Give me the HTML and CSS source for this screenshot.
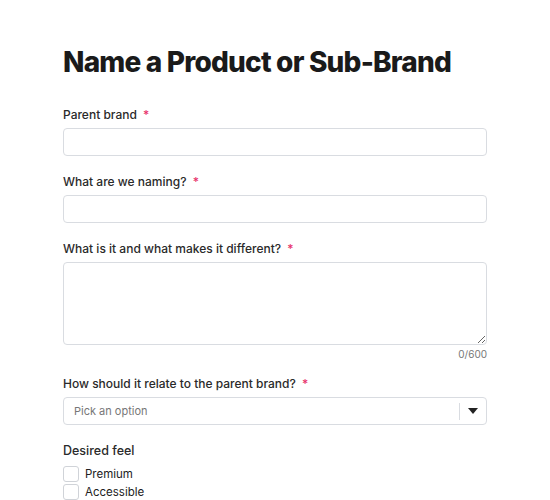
FILE: index.html
```html
<!DOCTYPE html>
<html lang="en">
<head>
  <meta charset="UTF-8">
  <meta name="viewport" content="width=device-width, initial-scale=1.0">
  <title>Name a Product or Sub-Brand</title>
  <link rel="stylesheet" href="styles.css">
</head>
<body>
  <div class="container">
    <h1>Name a Product or Sub-Brand</h1>
    <form>
      <div class="form-group">
        <label class="field-label" for="parent">Parent brand <span class="req">*</span></label>
        <input type="text" id="parent" name="parent">
      </div>

      <div class="form-group">
        <label class="field-label" for="naming">What are we naming? <span class="req">*</span></label>
        <input type="text" id="naming" name="naming">
      </div>

      <div class="form-group">
        <label class="field-label" for="about">What is it and what makes it different? <span class="req">*</span></label>
        <textarea id="about" name="about"></textarea>
        <div class="counter">0/600</div>
      </div>

      <div class="form-group">
        <label class="field-label" for="relate">How should it relate to the parent brand? <span class="req">*</span></label>
        <div class="select">
          <span class="placeholder">Pick an option</span>
          <span class="select-arrow">
            <svg width="10" height="6" viewBox="0 0 10 6"><path d="M0 0h10L5 6z" fill="#222"/></svg>
          </span>
        </div>
      </div>

      <div class="form-group">
        <div class="group-title">Desired feel</div>
        <label class="check"><input type="checkbox"> Premium</label>
        <label class="check"><input type="checkbox"> Accessible</label>
      </div>
    </form>
  </div>
</body>
</html>
```
FILE: styles.css
```css
*{box-sizing:border-box;margin:0;padding:0}
body{background:#fff;font-family:Inter,"Noto Sans",sans-serif;color:#222}
.container{width:424px;margin:0 0 0 63px;padding-top:44px}
h1{font-size:28px;font-weight:800;color:#1a1a1a;letter-spacing:-0.8px;line-height:36px;margin-bottom:27px}
.form-group{margin-bottom:18px}
.field-label{display:block;font-size:12px;font-weight:500;color:#2a2a2a;line-height:16px;margin-bottom:5px}
.req{color:#e8336d;font-size:12px;margin-left:3px}
input[type="text"]{display:block;width:100%;height:28px;border:1px solid #d9dce1;border-radius:4px;background:#fff;font:inherit}
textarea{display:block;width:100%;height:83px;border:1px solid #d9dce1;border-radius:4px;resize:vertical;font:inherit}
.counter{text-align:right;font-size:10px;color:#777;margin-top:3px;line-height:12px}
.form-group:has(.counter){margin-bottom:16px}
.select{display:flex;align-items:center;height:28px;border:1px solid #d9dce1;border-radius:4px;font-size:11px;color:#777}
.placeholder{flex:1;padding-left:10px}
.select-arrow{display:flex;align-items:center;justify-content:center;width:27px;height:17px;border-left:1px solid #d9dce1}
.group-title{font-size:12.5px;font-weight:500;color:#2a2a2a;line-height:16px;margin-bottom:6px}
.check{display:flex;align-items:center;gap:6px;font-size:11.5px;color:#222;height:18px}
.check input{appearance:none;width:16px;height:16px;border:1px solid #d0d3d8;border-radius:3px;background:#fff}
```
